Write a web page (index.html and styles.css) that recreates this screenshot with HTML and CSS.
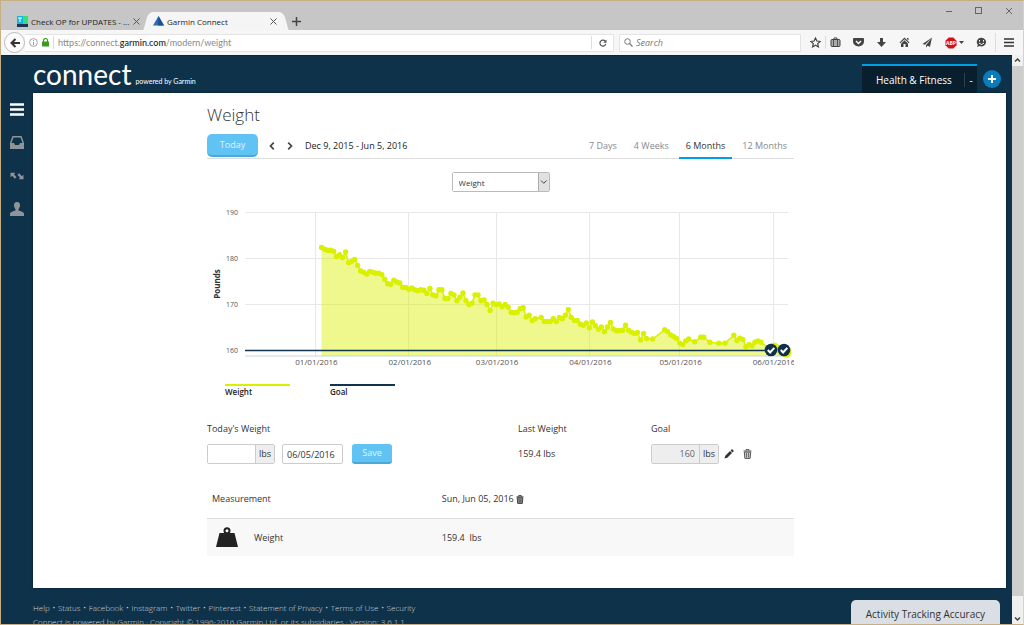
FILE: index.html
```
<!DOCTYPE html>
<html lang="en">
<head>
  <meta charset="UTF-8">
  <meta name="viewport" content="width=device-width, initial-scale=1.0">
  <title>Garmin Connect</title>
  <link rel="stylesheet" href="styles.css">
</head>
<body>
  <!-- Browser tabs -->
  <div class="tabstrip">
    <div class="tab">
      <svg width="11" height="11" viewBox="0 0 11 11"><rect width="11" height="11" fill="#12b5e0"/><path d="M6 0h5v8H6z" fill="#35e07a"/><path d="M0 8h11v3H0z" fill="#1c3550"/><path d="M1 2h4M3 2v4" stroke="#fff" fill="none"/></svg>
      <span class="tab-title">Check OP for UPDATES - ...</span>
      <button class="tab-close" aria-label="Close tab"><svg width="7" height="7" viewBox="0 0 7 7"><path d="M.5 .5l6 6M6.500 .5l-6 6" stroke="#555" fill="none"/></svg></button>
    </div>
    <div class="tab active">
      <svg width="11" height="10" viewBox="0 0 11 10"><path d="M5.500 0L11 9.500H0z" fill="#2b6cb5"/><path d="M5.500 0L11 9.500H5z" fill="#1d4f94"/></svg>
      <span class="tab-title">Garmin Connect</span>
      <button class="tab-close" aria-label="Close tab"><svg width="7" height="7" viewBox="0 0 7 7"><path d="M.5 .5l6 6M6.500 .5l-6 6" stroke="#555" fill="none"/></svg></button>
    </div>
    <button class="new-tab" aria-label="New tab"><svg width="9" height="9" viewBox="0 0 9 9"><path d="M4.500 0v9M0 4.500h9" stroke="#444" stroke-width="1.500"/></svg></button>
    <div class="window-buttons">
      <button aria-label="Minimize"><svg width="8" height="8" viewBox="0 0 8 8"><path d="M1 4.500h6" stroke="#666"/></svg></button>
      <button aria-label="Maximize"><svg width="8" height="8" viewBox="0 0 8 8"><rect x=".5" y=".5" width="6" height="6" fill="none" stroke="#666"/></svg></button>
      <button aria-label="Close"><svg width="8" height="8" viewBox="0 0 8 8"><path d="M1 1l6 6M7 1L1 7" stroke="#666"/></svg></button>
    </div>
  </div>

  <!-- Address bar -->
  <div class="toolbar">
    <button class="back" aria-label="Back"><svg width="10" height="10" viewBox="0 0 10 10"><path d="M5.500 1L1.500 5l4 4M2 5h8" fill="none" stroke="#333" stroke-width="2"/></svg></button>
    <div class="urlbar">
      <svg width="9" height="9" viewBox="0 0 9 9"><circle cx="4.500" cy="4.500" r="3.900" fill="none" stroke="#999" stroke-width=".9"/><path d="M4.500 4v3M4.500 2v1" stroke="#999"/></svg>
      <svg width="7" height="9" viewBox="0 0 7 9"><path d="M1.500 4V2.500a2 2 0 0 1 4 0V4" fill="none" stroke="#3c9a1c" stroke-width="1.200"/><rect y="3.500" width="7" height="5" rx=".6" fill="#3c9a1c"/></svg>
      <span class="sep"></span>
      <span class="url">https://connect.<b>garmin.com</b>/modern/weight</span>
      <span class="sep"></span>
      <button aria-label="Reload"><svg width="8" height="8" viewBox="0 0 8 8"><path d="M6.300 2.200A3 3 0 1 0 6.800 5" fill="none" stroke="#555" stroke-width="1.200"/><path d="M7.500 .5v3.200H4.300z" fill="#555"/></svg></button>
    </div>
    <label class="search">
      <svg width="9" height="9" viewBox="0 0 9 9"><circle cx="3.500" cy="3.500" r="2.800" fill="none" stroke="#777"/><path d="M5.500 5.500l3 3" stroke="#777" stroke-width="1.300"/></svg>
      <input type="text" placeholder="Search" aria-label="Search">
    </label>
    <div class="tools">
      <button aria-label="Bookmark"><svg width="11" height="11" viewBox="0 0 11 11"><path d="M5.500 1l1.400 3 3.200.4-2.400 2.200.7 3.300-2.900-1.700-2.900 1.700.7-3.300L.9 4.400 4.100 4z" fill="none" stroke="#444" stroke-width="1.200"/></svg></button>
      <span class="sep"></span>
      <button aria-label="Bookmarks list"><svg width="11" height="11" viewBox="0 0 11 11"><path d="M4 2.500V1h3v1.500" fill="none" stroke="#444"/><rect x="1" y="2.500" width="9" height="7" rx="1" fill="#aaa" stroke="#444"/><path d="M3.500 3v6M7.500 3v6" stroke="#555"/></svg></button>
      <button aria-label="Pocket"><svg width="11" height="11" viewBox="0 0 11 11"><path d="M1 1h9q1 0 1 1v2.500a5.500 5 0 0 1-11 0V2q0-1 1-1z" fill="#444"/><path d="M3 4l2.500 2.500L8 4" fill="none" stroke="#fff" stroke-width="1.400"/></svg></button>
      <button aria-label="Downloads"><svg width="11" height="11" viewBox="0 0 11 11"><path d="M4 1h3v4h3L5.500 10 1 5h3z" fill="#444"/></svg></button>
      <button aria-label="Home"><svg width="11" height="11" viewBox="0 0 11 11"><path d="M5.500 .5l5 5-.8.800L5.500 2.200 1.300 6.300l-.8-.8zM8 1h1.500v2.500L8 2zM5.500 3.200L9 6.700V10H6.500V7h-2v3H2V6.700z" fill="#444"/></svg></button>
      <button aria-label="Share"><svg width="11" height="11" viewBox="0 0 11 11"><path d="M10 .5L.5 7l2.500.8zM10 .5L4 8.200v2.300L5.500 8.700l2.500 1z" fill="#444"/></svg></button>
      <button class="abp" aria-label="Adblock Plus">
        <svg width="12" height="12" viewBox="0 0 12 12"><path d="M3.700 .5h4.600l3.200 3.200v4.600l-3.200 3.200H3.700L.5 8.300V3.700z" fill="#d4111b"/><text class="abp-text" x="6" y="8" text-anchor="middle">ABP</text></svg>
        <svg width="5" height="3" viewBox="0 0 5 3"><path d="M0 0h5L2.500 3z" fill="#444"/></svg>
      </button>
      <button aria-label="Chat"><svg width="11" height="11" viewBox="0 0 11 11"><path d="M5.500 .8a4.600 4.300 0 1 1-2 8.200L1 10l.8-2.200A4.300 4.300 0 0 1 5.500 .8z" fill="#444"/><path d="M3.500 3v1.500M7.500 3v1.500M3 6q2.500 3 5 0" stroke="#fff" fill="none"/></svg></button>
      <span class="sep"></span>
      <button aria-label="Menu"><svg width="10" height="9" viewBox="0 0 10 9"><path d="M0 1h10M0 4.500h10M0 8h10" stroke="#333" stroke-width="1.700"/></svg></button>
    </div>
  </div>

  <div class="viewport">
    <div class="app">
      <header class="header">
        <a class="logo" href="#">connect</a>
        <span class="powered">powered by Garmin</span>
        <div class="dash-tab">
          <a href="#">Health &amp; Fitness</a>
          <button aria-label="Dashboard options">-</button>
        </div>
        <button class="add" aria-label="Add dashboard"><svg width="8" height="8" viewBox="0 0 8 8"><path d="M4 0v8M0 4h8" stroke="#fff" stroke-width="2"/></svg></button>
      </header>

      <div class="main">
        <nav class="sidebar">
          <a href="#" aria-label="Menu"><svg width="14" height="13" viewBox="0 0 14 13"><path d="M0 1.500h14M0 6.500h14M0 11.500h14" stroke="#fff" stroke-width="2.400"/></svg></a>
          <a href="#" aria-label="Inbox"><svg width="14" height="13" viewBox="0 0 14 13"><path d="M3 .8h8l2.200 6V12H.8V6.800z" fill="none" stroke="#8f9499" stroke-width="1.500"/><path d="M0 7h4l1 2h4l1-2h4v6H0z" fill="#8f9499"/></svg></a>
          <a href="#" aria-label="Connections"><svg width="14" height="8" viewBox="0 0 14 8"><path d="M.5 .8h4.800L4 2.200l2.500 3-1.700 1.500-2.600-3L.5 5.300zM13.500 7.200H8.700L10 5.800l-2.500-3 1.700-1.500 2.600 3 1.700-1.600z" fill="#8f9499"/></svg></a>
          <a href="#" aria-label="Profile"><svg width="14" height="14" viewBox="0 0 14 14"><path d="M7 0c2.200 0 3.200 1.600 3 3.600-.2 1.900-.8 3-1.500 3.700v1.200c2.500.8 5 1.500 5.500 3V14H0v-2.500c.5-1.500 3-2.200 5.500-3V7.300C4.800 6.600 4.200 5.500 4 3.600 3.800 1.600 4.800 0 7 0z" fill="#8f9499"/></svg></a>
        </nav>

        <main class="panel">
          <h1>Weight</h1>
          <div class="range-bar">
            <button class="btn today">Today</button>
            <button class="step" aria-label="Previous"><svg width="6" height="8" viewBox="0 0 6 8"><path d="M4.800 .7L1.500 4l3.300 3.300" fill="none" stroke="#444" stroke-width="1.700"/></svg></button>
            <button class="step" aria-label="Next"><svg width="6" height="8" viewBox="0 0 6 8"><path d="M1.200 .7L4.500 4 1.200 7.300" fill="none" stroke="#444" stroke-width="1.700"/></svg></button>
            <span class="range">Dec 9, 2015 - Jun 5, 2016</span>
            <nav class="periods">
              <a href="#">7 Days</a>
              <a href="#">4 Weeks</a>
              <a href="#" class="active">6 Months</a>
              <a href="#">12 Months</a>
            </nav>
          </div>

          <div class="metric">
            <select aria-label="Metric">
              <option>Weight</option>
            </select>
            <svg width="11" height="18" viewBox="0 0 11 18"><rect width="11" height="18" fill="#e1e1e1"/><path d="M.5 0v18" stroke="#aaa"/><path d="M3 7.500L5.800 10.300 8.500 7.500" fill="none" stroke="#444"/></svg>
          </div>

          <!-- Weight chart, filled in by script.js -->
          <svg class="chart" viewBox="0 0 587 172" role="img" aria-label="Weight chart">
            <defs>
              <marker id="dot" markerWidth="6" markerHeight="6" refX="3" refY="3" markerUnits="userSpaceOnUse"><circle cx="3" cy="3" r="2.700" fill="#d9f000"/></marker>
            </defs>
            <g id="grid"></g>
            <polygon id="area" class="area"/>
            <path class="axis" d="M38 156h543"/>
            <polyline id="line" class="line"/>
            <path class="goal-line" d="M38 150.500h543"/>
            <g id="badges"></g>
            <text class="axis-title" transform="translate(13 84) rotate(-90)" text-anchor="middle">Pounds</text>
          </svg>

          <div class="legend">
            <span class="legend-weight">Weight</span>
            <span class="legend-goal">Goal</span>
          </div>

          <form class="entry">
            <div>
              <label for="todayWeight">Today's Weight</label>
              <div class="fields">
                <span class="unit-field"><input type="text" id="todayWeight"><span>lbs</span></span>
                <input type="text" class="date" value="06/05/2016" aria-label="Date">
                <button type="button" class="btn save">Save</button>
              </div>
            </div>
            <div>
              <span class="label">Last Weight</span>
              <div class="fields">159.4 lbs</div>
            </div>
            <div>
              <label for="goal">Goal</label>
              <div class="fields">
                <span class="unit-field locked"><input type="text" id="goal" value="160" readonly><span>lbs</span></span>
                <button type="button" class="icon" aria-label="Edit goal"><svg width="10" height="10" viewBox="0 0 10 10"><path d="M.5 9.500l.8-2.800L6 2l2 2-4.700 4.700zM6.600 1.400l.9-.9q.5-.4 1 0l1 1q.4.500 0 1l-.9.900z" fill="#333"/></svg></button>
                <button type="button" class="icon" aria-label="Delete goal"><svg width="9" height="10" viewBox="0 0 9 10"><path d="M.5 2h8M3 1.500V.6h3v.9" fill="none" stroke="#555"/><path d="M1.300 3l.6 6.400h5.200L7.700 3z" fill="#ccc" stroke="#555"/><path d="M3.500 4v4.500M5.500 4v4.500" stroke="#555" stroke-width=".8"/></svg></button>
              </div>
            </div>
          </form>

          <table class="measurements">
            <colgroup>
              <col class="col-icon">
              <col class="col-name">
              <col>
            </colgroup>
            <thead>
              <tr>
                <th colspan="2">Measurement</th>
                <th>Sun, Jun 05, 2016 <button class="icon" aria-label="Delete entry"><svg width="8" height="9" viewBox="0 0 9 10"><path d="M.5 2h8M3 1.500V.6h3v.9" fill="none" stroke="#333"/><path d="M1.300 3l.6 6.400h5.200L7.700 3z" fill="#999" stroke="#333"/><path d="M3.500 4v4.500M5.500 4v4.500" stroke="#333" stroke-width=".8"/></svg></button></th>
              </tr>
            </thead>
            <tbody>
              <tr>
                <td class="kind"><svg width="22" height="20" viewBox="0 0 22 20"><circle cx="11" cy="3.700" r="2.500" fill="none" stroke="#222" stroke-width="2"/><path d="M3.500 6h15L22 20H0z" fill="#222"/></svg></td>
                <td>Weight</td>
                <td>159.4&nbsp; lbs</td>
              </tr>
            </tbody>
          </table>
        </main>
      </div>

      <footer class="footer">
        <ul>
          <li><a href="#">Help</a></li>
          <li><a href="#">Status</a></li>
          <li><a href="#">Facebook</a></li>
          <li><a href="#">Instagram</a></li>
          <li><a href="#">Twitter</a></li>
          <li><a href="#">Pinterest</a></li>
          <li><a href="#">Statement of Privacy</a></li>
          <li><a href="#">Terms of Use</a></li>
          <li><a href="#">Security</a></li>
        </ul>
        <p>Connect is powered by Garmin · Copyright © 1996-2016 Garmin Ltd. or its subsidiaries · Version: 3.6.1.1</p>
      </footer>
      <a class="accuracy" href="#">Activity Tracking Accuracy</a>
    </div>

    <div class="scrollbar">
      <svg width="11" height="11" viewBox="0 0 11 11"><path d="M3 6.500L5.500 4 8 6.500" fill="none" stroke="#444" stroke-width="1.500"/></svg>
      <div class="thumb"></div>
      <svg width="11" height="11" viewBox="0 0 11 11"><path d="M3 4.500L5.500 7 8 4.500" fill="none" stroke="#444" stroke-width="1.500"/></svg>
    </div>
  </div>

  <script src="script.js"></script>
</body>
</html>
```
FILE: styles.css
```
* {
  box-sizing: border-box;
}
body {
  margin: 0;
  height: 100vh;
  display: flex;
  flex-direction: column;
  overflow: hidden;
  border: 1px solid #c9ad83;
  border-right-color: #ddd0bc;
  font-family: "Open Sans", "Noto Sans", sans-serif;
  font-size: 9px;
  color: #333;
}
a {
  color: inherit;
  text-decoration: none;
}
button {
  padding: 0;
  border: none;
  background: none;
  font: inherit;
  color: inherit;
  display: flex;
  align-items: center;
  justify-content: center;
}
svg {
  flex: none;
  display: block;
}
input {
  font: inherit;
  color: inherit;
}

/* Browser tabs */
.tabstrip {
  position: relative;
  z-index: 0;
  display: flex;
  align-items: flex-end;
  height: 29px;
  flex: none;
  background: #c6c6c6;
  color: #222;
}
.tab {
  display: flex;
  align-items: center;
  gap: 3px;
  width: 143px;
  height: 18px;
  padding: 0 4px 0 16px;
}
.tab.active {
  position: relative;
  width: 134px;
  margin-left: 5px;
  padding: 0 6px 0 4px;
  background: #f5f5f5;
  border-radius: 5px 5px 0 0;
}
.tab.active::before,
.tab.active::after {
  content: "";
  position: absolute;
  top: 0;
  width: 10px;
  height: 18px;
  background: #f5f5f5;
  z-index: -1;
}
.tab.active::before {
  left: -3px;
  border-radius: 5px 0 0 0;
  transform: skewX(-16deg);
}
.tab.active::after {
  right: -3px;
  border-radius: 0 5px 0 0;
  transform: skewX(16deg);
}
.tab-title {
  flex: 1;
  white-space: nowrap;
  font-size: 8px;
}
.new-tab {
  width: 27px;
  height: 18px;
}
.window-buttons {
  display: flex;
  gap: 22px;
  margin-left: auto;
  align-self: flex-start;
  padding: 6px 10px;
}

/* Address bar */
.toolbar {
  display: flex;
  align-items: center;
  height: 25px;
  flex: none;
  padding: 0 9px 0 3px;
  background: #f6f6f6;
}
.sep {
  width: 1px;
  height: 13px;
  background: #ddd;
}
.back {
  width: 21px;
  height: 21px;
  flex: none;
  border: 1px solid #bbb;
  border-radius: 50%;
  background: #fcfcfc;
}
.urlbar {
  display: flex;
  align-items: center;
  gap: 4px;
  flex: 1;
  height: 18px;
  padding: 0 4px;
  border: 1px solid #e4e4e4;
  border-left: none;
  background: #fff;
}
.url {
  flex: 1;
  font-family: Lato, sans-serif;
  color: #888;
}
.url b {
  font-weight: 500;
  color: #222;
}
.urlbar button {
  width: 13px;
}
.search {
  display: flex;
  align-items: center;
  gap: 3px;
  width: 182px;
  height: 18px;
  margin-left: 5px;
  padding: 0 4px;
  border: 1px solid #e4e4e4;
  background: #fff;
}
.search input {
  width: 100%;
  min-width: 0;
  padding: 0;
  border: none;
}
.search input::placeholder {
  font-style: italic;
  color: #777;
}
.tools {
  display: flex;
  align-items: center;
  gap: 12px;
  margin-left: 9px;
}
.tools .sep {
  margin: 0 -8px;
}
.tools .sep:nth-last-child(2) {
  margin: 0 -4px;
  height: 19px;
}
.abp {
  gap: 2px;
}
.abp-text {
  font-size: 5px;
  font-weight: bold;
  fill: #fff;
}

/* Page */
.viewport {
  display: flex;
  flex: 1;
  min-height: 0;
}
.app {
  position: relative;
  flex: 1;
  overflow: hidden;
  background: #0f324b;
  border-top: 1px solid #0a2638;
}
.header {
  display: flex;
  align-items: flex-end;
  height: 37px;
  padding: 0 11px 0 32px;
  color: #fff;
}
.logo {
  font-family: Lato, sans-serif;
  font-size: 28px;
  line-height: 37px;
}
.powered {
  flex: 1;
  margin-left: 4px;
  font-family: Lato, sans-serif;
  font-size: 7px;
  line-height: 24px;
}
.dash-tab {
  display: flex;
  align-items: center;
  width: 115px;
  height: 29px;
  padding-left: 14px;
  border-top: 2px solid #009fe3;
  background: #0a1f2e;
  font-size: 10px;
}
.dash-tab a {
  flex: 1;
}
.dash-tab button {
  width: 13px;
  height: 14px;
  border-left: 1px solid #33414d;
}
.add {
  width: 18px;
  height: 18px;
  margin: 0 0 5px 6px;
  border-radius: 50%;
  background: #0a7cba;
}
.main {
  display: flex;
  padding-right: 6px;
}
.sidebar {
  display: flex;
  flex-direction: column;
  gap: 20px;
  width: 32px;
  flex: none;
  padding: 10px 0 0 9px;
}
.sidebar a {
  display: flex;
  align-items: center;
  height: 13px;
}
.panel {
  flex: 1;
  min-width: 0;
  padding: 10px 212px 32px 174px;
  background: #fff;
  box-shadow: 0 0 2px #061a28;
}
h1 {
  margin: 0;
  font-size: 17px;
  font-weight: 300;
  line-height: 24px;
}
.btn {
  border-radius: 3px;
  border-bottom: 2px solid #4ba9d6;
  background: #60c3f3;
  color: #e2f5fe;
}
.range-bar {
  display: flex;
  align-items: center;
  height: 32px;
  padding-top: 6px;
  border-bottom: 1px solid #ddd;
}
.today {
  width: 51px;
  height: 23px;
  margin-right: 5px;
  border-radius: 5px;
}
.step {
  width: 18px;
  height: 18px;
}
.range {
  margin-left: 6px;
  color: #222;
}
.periods {
  display: flex;
  gap: 3px;
  margin-left: auto;
  align-self: flex-end;
  color: #888;
}
.periods a {
  height: 25px;
  padding: 0 7px;
  margin-bottom: -1px;
  line-height: 24px;
}
.periods .active {
  border-bottom: 2px solid #009fe8;
  color: #333;
}
.metric {
  display: flex;
  width: 98px;
  height: 20px;
  margin: 13px auto 8px;
  border: 1px solid #bbb;
  border-radius: 2px;
}
.metric select {
  flex: 1;
  min-width: 0;
  padding: 0 6px;
  border: none;
  background: #fff;
  appearance: none;
  font-family: inherit;
  font-size: 8px;
  color: #333;
}

/* Chart */
.chart {
  width: 100%;
}
.chart text {
  font-size: 8px;
  fill: #555;
}
.chart .y-label {
  font-size: 7px;
}
.chart .axis-title {
  font-weight: bold;
  fill: #333;
}
.gridline {
  stroke: #e8e8e8;
}
.area {
  fill: #d9f000;
  fill-opacity: 0.45;
}
.line {
  fill: none;
  stroke: #d9f000;
  stroke-width: 1.5;
  marker: url(#dot);
}
.axis {
  stroke: #c4d6e4;
}
.goal-line {
  stroke: #11354f;
  stroke-width: 1.5;
}
.legend {
  display: flex;
  gap: 40px;
  padding: 12px 18px 0;
  font-size: 8px;
  font-weight: 600;
  line-height: 12px;
  color: #222;
}
.legend span {
  width: 65px;
  border-top: 2px solid #11354f;
}
.legend .legend-weight {
  border-color: #d9f000;
}

/* Entry form */
.entry {
  display: grid;
  grid-template-columns: 311fr 133fr 143fr;
  margin-top: 24px;
  line-height: 14px;
}
.entry label,
.label {
  display: block;
}
.fields {
  display: flex;
  align-items: center;
  height: 20px;
  margin-top: 8px;
}
.unit-field {
  display: flex;
  width: 68px;
  height: 20px;
  border: 1px solid #ccc;
  border-radius: 2px;
  overflow: hidden;
}
.unit-field input {
  flex: 1;
  min-width: 0;
  padding: 0 4px;
  border: none;
  text-align: right;
}
.unit-field span {
  width: 19px;
  border-left: 1px solid #ccc;
  background: #eee;
  text-align: center;
  line-height: 18px;
}
.locked input {
  background: #eee;
  color: #666;
}
.date {
  width: 61px;
  height: 20px;
  margin: 0 9px 0 7px;
  padding: 0 4px;
  border: 1px solid #ccc;
  border-radius: 2px;
}
.save {
  width: 40px;
  height: 20px;
}
.icon {
  display: inline-flex;
  vertical-align: middle;
}
.fields .icon {
  width: 19px;
}

/* Measurements */
.measurements {
  width: 100%;
  margin-top: 15px;
  border-collapse: collapse;
  table-layout: fixed;
  text-align: left;
}
.col-icon {
  width: 8%;
}
.col-name {
  width: 32%;
}
.measurements th {
  height: 39px;
  padding: 0;
  font-weight: normal;
}
.measurements th:first-child {
  padding-left: 5px;
}
.measurements td {
  height: 38px;
  padding: 0;
  border-top: 1px solid #ddd;
  background: #f8f8f8;
}
.measurements .kind {
  padding-left: 9px;
}

/* Footer */
.footer {
  padding: 13px 0 0 32px;
  font-size: 8px;
  font-weight: 300;
  line-height: 14px;
  color: #c8d2da;
}
.footer ul {
  display: flex;
  margin: 0;
  padding: 0;
  list-style: none;
}
.footer li + li::before {
  content: "·";
  margin: 0 3px;
  font-weight: bold;
}
.footer p {
  margin: 0;
}
.accuracy {
  position: absolute;
  right: 12px;
  bottom: 0;
  padding: 4px 15px 0;
  border-radius: 5px 5px 0 0;
  background: #d9dfe4;
  font-size: 10px;
  line-height: 20px;
}
.scrollbar {
  display: flex;
  flex-direction: column;
  width: 11px;
  flex: none;
  background: #f0f0f0;
}
.thumb {
  flex: 1;
  margin-bottom: 17px;
  background: #cdcdcd;
}
```
FILE: script.js
```
// One reading per day starting Jan 3, null where nothing was logged
const weights = [
  182.4, 182, 181.8, 181.8, 181.6, 180.4, 180.8, 180.2, 181.4, 179.1, 179.4, 179.8, 178.5, 177.3, 177,
  176.6, 177.2, 177, 176.8, 176.8, 176.5, 175.5, 174.5, 174.4, 175.3, 174.9, 174.7, 173.7, 173.7, 173.3,
  173.6, 173.2, 173, 173.2, 173.1, 172.4, 173.5, 172.1, 171.9, 173.2, 173.2, 171.3, 171.3, 172.4, 172.1,
  170.8, 171.6, 172.5, 170.8, 170, 170.3, 172.1, 172.1, 170.8, 171, 170, 168.7, 170.3, 170, 170.1,
  169.5, 170, 169.4, 168.3, 168.2, 168.3, 169.1, 169.3, 167.3, 167.7, 166.5, 166.9, null, 167.2, 166.3,
  166.3, 166.3, 166.9, 166.3, 167.2, 166.9, 167.7, 168.9, 167.2, 166.5, 166.5, 165.7, 165.5, 166, 164.9,
  166.2, 165.4, 164.6, 165.1, 164.1, 165.1, 166.1, 164.7, 164.3, 164.3, 164.4, 165.5, 164.4, 164,
  163.7, 163.9, 162.3, 163.7, 162.6, null, 162.5, null, null, null, 164.5, 164.1, 163.4, 163, 162.6,
  161.6, 161.3, 162.1, 162.5, null, 161.9, null, 162.9, 162.9, null, 161.8, null, null, 161.6, null,
  161.6, null, null, 163.3, 162.2, 162.7, 162.4, 160.8, 161.3, 161, 161.8, 162.1, 161.8, null, null,
  160.2, 160.5, null, 159.9, null, 159.4
];
const months = [['01/01/2016', -2], ['02/01/2016', 29], ['03/01/2016', 58], ['04/01/2016', 89], ['05/01/2016', 119], ['06/01/2016', 150]];

const xFor = day => 114.5 + day * 3.01;
const yFor = lbs => 12.5 + (190 - lbs) * 4.6;

let grid = '';
[190, 180, 170, 160].forEach(lbs => {
  grid += `<path class="gridline" d="M38 ${Math.floor(yFor(lbs)) + 0.5}h543"/>`;
  grid += `<text class="y-label" x="31" y="${yFor(lbs) + 2}" text-anchor="end">${lbs}</text>`;
});
months.forEach(([label, day]) => {
  grid += `<path class="gridline" d="M${Math.floor(xFor(day)) + 0.5} 12v144"/>`;
  grid += `<text x="${xFor(day) + 1}" y="165" text-anchor="middle">${label}</text>`;
});
document.getElementById('grid').innerHTML = grid;

const points = [];
weights.forEach((lbs, day) => {
  if (lbs !== null) points.push(`${xFor(day)},${yFor(lbs)}`);
});
document.getElementById('line').setAttribute('points', points.join(' '));
document.getElementById('area').setAttribute('points',
  `${xFor(0)},156 ${points.join(' ')} ${xFor(weights.length - 1)},156`);

// Readings that met the goal: a larger dot with a check badge over it
const goals = [{ x: 564, dotX: 567, dotY: 148 }, { x: 577, dotX: 579, dotY: 152 }];
document.getElementById('badges').innerHTML = goals.map(g => `
  <circle cx="${g.dotX}" cy="${g.dotY}" r="5.500" fill="#d9f000"/>
  <g transform="translate(${g.x} 150)">
    <circle r="6.300" fill="#11304a"/>
    <path d="M-3.200 0l2.300 2.500L3.300 -2.200" fill="none" stroke="#fff" stroke-width="2"/>
  </g>`).join('');
```
